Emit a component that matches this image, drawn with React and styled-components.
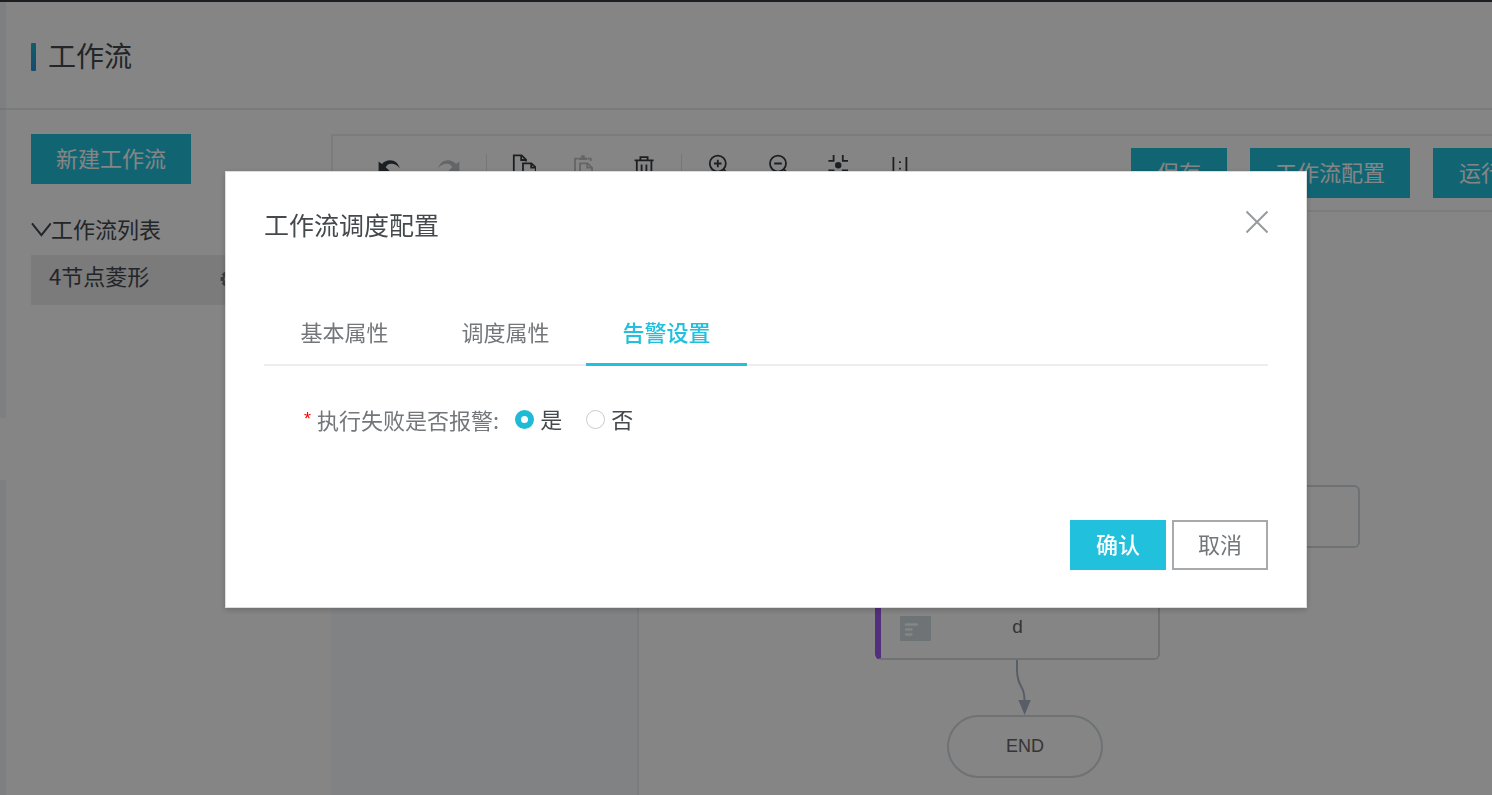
import React, { useState } from 'react';
import styled, { createGlobalStyle } from 'styled-components';

const GlobalStyle = createGlobalStyle`
  * {
    box-sizing: border-box;
  }

  body {
    margin: 0;
    overflow: hidden;
    background: #fff;
    color: #43494d;
    font-family: 'Noto Sans CJK SC', sans-serif;
    font-size: 22px;
    line-height: 30px;
  }

  button {
    margin: 0;
    padding: 0;
    border: 0;
    background: none;
    color: inherit;
    font: inherit;
    cursor: pointer;
  }
`;

const Page = styled.div`
  display: flex;
  width: calc(100% + 40px);
  height: 100vh;
  border-top: 2px solid #373d41;
`;

const Gutter = styled.div`
  display: flex;
  flex-direction: column;
  flex: 0 0 6px;
`;

const GutterPart = styled.div`
  flex: ${props => props.$height ? `0 0 ${props.$height}px` : '1'};
  background: #f0f3f8;
  border-bottom: ${props => props.$line ? '2px solid #e4e5e6' : '0'};
`;

const GutterHandle = styled.button`
  flex: 0 0 62px;
  width: 6px;
`;

const Main = styled.main`
  display: flex;
  flex-direction: column;
  flex: 1;
  min-width: 0;
`;

const PageHeader = styled.header`
  display: flex;
  align-items: flex-end;
  flex: 0 0 108px;
  gap: 12px;
  padding: 0 0 37px 25px;
  border-bottom: 2px solid #e9eaeb;
`;

const TitleMark = styled.span`
  width: 5px;
  height: 28px;
  border-radius: 1px;
  background: linear-gradient(#1fb3cb, #2f8fd4);
`;

const PageTitle = styled.h1`
  margin: 0;
  font-size: 28px;
  font-weight: 400;
  line-height: 32px;
`;

const Content = styled.div`
  display: flex;
  flex: 1;
  min-height: 0;
  gap: 75px;
  padding: 24px 0 0 25px;
`;

const Sidebar = styled.aside`
  flex: 0 0 225px;
`;

const Button = styled.button`
  flex: none;
  min-width: 96px;
  height: 50px;
  padding: 0 24px 4px;
  border: ${props => props.$primary ? '1px solid #21c1dd' : '2px solid #a6aaac'};
  background: ${props => props.$primary ? '#21c1dd' : '#fff'};
  color: ${props => props.$primary ? '#fff' : '#73777a'};
  font-weight: ${props => props.$strong ? 500 : 400};
`;

const ListToggle = styled.button`
  display: flex;
  align-items: flex-end;
  height: 30px;
  margin-top: 29px;
`;

const FlowItem = styled.div`
  display: flex;
  justify-content: space-between;
  height: 50px;
  margin-top: 12px;
  padding: 5px 18px;
  background: #ebebeb;

  svg {
    margin-top: 10px;
    color: #777;
  }
`;

const Workspace = styled.section`
  display: flex;
  flex-direction: column;
  flex: 1;
  min-width: 0;
`;

const Toolbar = styled.div`
  display: flex;
  align-items: flex-start;
  flex: 0 0 78px;
  padding-left: 19px;
  border: solid #eeeeee;
  border-width: 2px 0 2px 2px;
`;

const ToolGroup = styled.div`
  display: flex;
  gap: 36px;
  height: 36px;
  margin-top: 18px;
  padding: 0 25px;

  & + & {
    border-left: 1px solid #e2e4e5;
  }
`;

const Tool = styled.button`
  width: 24px;
  height: 24px;
  color: ${props => props.disabled ? '#bfc2c4' : '#373d41'};

  svg {
    display: block;
    margin-top: -2px;
  }
`;

const Actions = styled.div`
  display: flex;
  gap: 23px;
  margin-left: auto;
  padding: 12px 3px 0 0;
`;

const Board = styled.div`
  display: flex;
  flex: 1;
  min-height: 0;
`;

const Palette = styled.div`
  flex: 0 0 308px;
  background: #f7fafd;
  border-right: 2px solid #ebedf0;
`;

const Canvas = styled.div`
  position: relative;
  flex: 1;
  overflow: hidden;
`;

const Node = styled.div`
  position: absolute;
  left: ${props => props.$x}px;
  top: ${props => props.$y}px;
  display: flex;
  align-items: center;
  width: 285px;
  height: 63px;
  padding-left: 19px;
  border: 2px solid #d3dae0;
  border-left: 6px solid #a058ee;
  border-radius: 6px;
  color: #666;
  font-family: 'Liberation Sans', sans-serif;
  font-size: 19px;
`;

const NodeName = styled.span`
  flex: 1;
  padding: 0 54px 4px 0;
  text-align: center;
`;

const EndNode = styled.div`
  position: absolute;
  left: 308px;
  top: 503px;
  width: 156px;
  height: 63px;
  padding-top: 14px;
  border: 2px solid #d3dae0;
  border-radius: 32px;
  color: #666;
  font-family: 'Liberation Sans', sans-serif;
  font-size: 18px;
  text-align: center;
`;

const Edge = styled.svg`
  position: absolute;
  left: 367px;
  top: 448px;
`;

const Overlay = styled.div`
  position: fixed;
  inset: 0;
  padding: 171px 185px 0 225px;
  background: rgba(0, 0, 0, 0.48);
`;

const Dialog = styled.div`
  padding: 34px 38px 37px;
  border: 1px solid #dcdddd;
  background: #fff;
  box-shadow: 0 2px 6px rgba(0, 0, 0, 0.2);
`;

const DialogHeader = styled.div`
  display: flex;
  align-items: flex-start;
  justify-content: space-between;
`;

const DialogTitle = styled.h2`
  margin: 0;
  font-size: 25px;
  font-weight: 400;
  line-height: 36px;
`;

const CloseButton = styled.button`
  height: 32px;
  color: #999c9e;

  svg {
    display: block;
  }
`;

const Tabs = styled.div`
  display: flex;
  height: 66px;
  margin-top: 58px;
  border-bottom: 2px solid #ededed;
`;

const Tab = styled.button`
  width: 161px;
  height: 66px;
  padding-bottom: 2px;
  border-bottom: 3px solid ${props => props.$active ? '#21c1dd' : 'transparent'};
  color: ${props => props.$active ? '#21c1dd' : '#73777a'};
  font-weight: ${props => props.$active ? 500 : 400};
`;

const Field = styled.div`
  display: flex;
  align-items: center;
  margin: 38px 0 0 40px;
`;

const FieldLabel = styled.span`
  margin-right: 16px;
  color: #73777a;
`;

const Required = styled.span`
  margin-right: 6px;
  color: #f00;
  font-family: 'Liberation Sans', sans-serif;
  font-size: 18px;
`;

const RadioLabel = styled.label`
  display: flex;
  align-items: flex-end;
  gap: 6px;
  height: 30px;
  margin-right: 24px;
  line-height: 32px;
  cursor: pointer;
`;

const Radio = styled.input`
  appearance: none;
  width: 19px;
  height: 19px;
  margin: 0 0 5px;
  border: 1px solid #cccccc;
  border-radius: 50%;
  background: #fff;

  &:checked {
    border: 6px solid #1fbad6;
  }
`;

const DialogFooter = styled.div`
  display: flex;
  justify-content: flex-end;
  gap: 6px;
  margin-top: 86px;
`;

const Icon = ({ children, filled }) => (
  <svg
    width="24"
    height="24"
    viewBox="0 0 24 24"
    fill={filled ? 'currentColor' : 'none'}
    stroke={filled ? 'none' : 'currentColor'}
    strokeWidth="1.8"
  >
    {children}
  </svg>
);

const undoPath =
  'M1.6 8.6L5 11C7.2 8.6 9.8 7.3 13 7.3C18 7.3 21.3 10.2 22.8 15.4C20.4 12.2 17.4 10.6 14 10.8C11.4 11 9.6 12.4 8.8 14.2L12.6 18H1.6Z';

const icons = {
  undo: <Icon filled><path d={undoPath} /></Icon>,
  redo: <Icon filled><path d={undoPath} transform="matrix(-1 0 0 1 24 0)" /></Icon>,
  copy: (
    <Icon>
      <path d="M10 19.8H1.8V2.4H9.6L14 6.6V8.4" />
      <path d="M9.2 2.4V7H14" />
      <path d="M11 10.4H19.4L23.8 14.6V24H11Z" />
      <path d="M19.2 10.4V14.6H23.8" />
    </Icon>
  ),
  paste: (
    <Icon>
      <path d="M6 5.6H3V22H7M16 5.6H18.8V8" />
      <path d="M6.6 7V4.6H9.3V2.2H12.7V4.6H15.4V7Z" fill="currentColor" stroke="none" />
      <path d="M8 10.4H15.6L20 14.6V24H8Z" />
      <path d="M15.2 10.4V14.6H20" />
    </Icon>
  ),
  trash: (
    <Icon>
      <path d="M2.6 7.4H21.6M8.4 7V4.2H15.6V7M4.8 7.4V22H19.4V7.4" />
      <path d="M9.6 11.6V18M14.4 11.6V18" />
    </Icon>
  ),
  zoomIn: (
    <Icon>
      <circle cx="10.8" cy="10.6" r="8" />
      <path d="M7 10.5H14.6M10.8 6.7V14.3M16.4 16.2L22 22" />
    </Icon>
  ),
  zoomOut: (
    <Icon>
      <circle cx="11" cy="10.6" r="8" />
      <path d="M7.2 10.5H14.8M16.6 16.2L22.2 22" />
    </Icon>
  ),
  fit: (
    <Icon>
      <path d="M6.6 2V7.8H1.4M15.8 2V7.8H21M6.6 22.4V17.4H1.4M15.8 22.4V17.4H21" />
      <circle cx="11.2" cy="12.2" r="3.2" fill="currentColor" stroke="none" />
    </Icon>
  ),
  actual: (
    <Icon>
      <path d="M6.4 4V21M19.4 4V21" />
      <path d="M12 9.2H13.8M12 15.6H13.8" />
    </Icon>
  )
};

const GearIcon = () => (
  <svg width="18" height="18" viewBox="0 0 18 18" fill="none" stroke="currentColor">
    <circle cx="9" cy="9" r="5.6" strokeWidth="2" />
    <path
      d="M9 0.6V3.4M9 14.6V17.4M0.6 9H3.4M14.6 9H17.4M3.1 3.1L5 5M13 13L14.9 14.9M3.1 14.9L5 13M13 5L14.9 3.1"
      strokeWidth="4"
    />
  </svg>
);

const toolGroups = [
  [
    { name: 'undo', label: '撤销' },
    { name: 'redo', label: '重做', disabled: true }
  ],
  [
    { name: 'copy', label: '复制' },
    { name: 'paste', label: '粘贴', disabled: true },
    { name: 'trash', label: '删除' }
  ],
  [
    { name: 'zoomIn', label: '放大' },
    { name: 'zoomOut', label: '缩小' },
    { name: 'fit', label: '适应画布' },
    { name: 'actual', label: '实际尺寸' }
  ]
];

const tabs = ['基本属性', '调度属性', '告警设置'];

const ScheduleDialog = () => {
  const [tab, setTab] = useState('告警设置');
  const [alarm, setAlarm] = useState('是');

  return (
    <Overlay>
      <Dialog role="dialog" aria-modal="true" aria-labelledby="dialog-title">
        <DialogHeader>
          <DialogTitle id="dialog-title">工作流调度配置</DialogTitle>
          <CloseButton aria-label="关闭">
            <svg width="22" height="32" viewBox="0 0 22 32" stroke="currentColor" strokeWidth="2">
              <path d="M0.5 5.5L21.5 26.5M21.5 5.5L0.5 26.5" />
            </svg>
          </CloseButton>
        </DialogHeader>
        <Tabs role="tablist">
          {tabs.map(name => (
            <Tab
              key={name}
              role="tab"
              aria-selected={tab === name}
              $active={tab === name}
              onClick={() => setTab(name)}
            >
              {name}
            </Tab>
          ))}
        </Tabs>
        <Field role="radiogroup" aria-labelledby="alarm-label">
          <Required>*</Required>
          <FieldLabel id="alarm-label">执行失败是否报警:</FieldLabel>
          {['是', '否'].map(value => (
            <RadioLabel key={value}>
              <Radio
                type="radio"
                name="alarm"
                value={value}
                checked={alarm === value}
                onChange={() => setAlarm(value)}
              />
              {value}
            </RadioLabel>
          ))}
        </Field>
        <DialogFooter>
          <Button $primary $strong>确认</Button>
          <Button>取消</Button>
        </DialogFooter>
      </Dialog>
    </Overlay>
  );
};

const App = () => (
  <>
    <GlobalStyle />
    <Page>
      <Gutter>
        <GutterPart $height={108} $line />
        <GutterPart $height={308} />
        <GutterHandle aria-label="收起菜单" />
        <GutterPart />
      </Gutter>
      <Main>
        <PageHeader>
          <TitleMark />
          <PageTitle>工作流</PageTitle>
        </PageHeader>
        <Content>
          <Sidebar>
            <Button $primary>新建工作流</Button>
            <ListToggle>
              <svg width="20" height="24" viewBox="0 0 20 24" fill="none" stroke="currentColor" strokeWidth="2">
                <path d="M1 4.4L10.4 16.2L19.8 4.4" />
              </svg>
              工作流列表
            </ListToggle>
            <FlowItem>
              4节点菱形
              <GearIcon />
            </FlowItem>
          </Sidebar>
          <Workspace>
            <Toolbar>
              {toolGroups.map((group, index) => (
                <ToolGroup key={index}>
                  {group.map(tool => (
                    <Tool key={tool.name} aria-label={tool.label} disabled={tool.disabled}>
                      {icons[tool.name]}
                    </Tool>
                  ))}
                </ToolGroup>
              ))}
              <Actions>
                <Button $primary>保存</Button>
                <Button $primary>工作流配置</Button>
                <Button $primary>运行</Button>
              </Actions>
            </Toolbar>
            <Board>
              <Palette />
              <Canvas>
                <Node $x={436} $y={273} />
                <Node $x={236} $y={385}>
                  <svg width="31" height="25" viewBox="0 0 31 25">
                    <rect width="31" height="25" rx="1" fill="#d3dde3" />
                    <path
                      d="M6 8.5H17M6 13.5H11.5M6 18.5H11.5"
                      stroke="#fff"
                      strokeWidth="2.4"
                      strokeLinecap="round"
                    />
                  </svg>
                  <NodeName>d</NodeName>
                </Node>
                <Edge width="30" height="56" viewBox="0 0 30 56">
                  <path
                    d="M11 0V10C11 28 18.5 24 18.5 40"
                    fill="none"
                    stroke="#aab4c4"
                    strokeWidth="2"
                  />
                  <path d="M12.4 40H24.8L18.6 55Z" fill="#aab4c8" />
                </Edge>
                <EndNode>END</EndNode>
              </Canvas>
            </Board>
          </Workspace>
        </Content>
      </Main>
    </Page>
    <ScheduleDialog />
  </>
);

export default App;
